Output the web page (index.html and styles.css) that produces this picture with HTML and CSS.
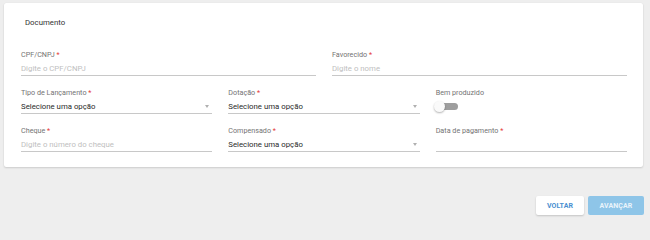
FILE: index.html
```html
<!DOCTYPE html>
<html lang="pt">
<head>
<meta charset="utf-8">
<link rel="stylesheet" href="styles.css">
</head>
<body>
<div class="page">
  <section class="card">
    <h2 class="title">Documento</h2>
    <div class="row two">
      <div class="field">
        <label class="label">CPF/CNPJ <span class="req">*</span></label>
        <div class="input placeholder">Digite o CPF/CNPJ</div>
      </div>
      <div class="field">
        <label class="label">Favorecido <span class="req">*</span></label>
        <div class="input placeholder">Digite o nome</div>
      </div>
    </div>
    <div class="row three">
      <div class="field">
        <label class="label">Tipo de Lançamento <span class="req">*</span></label>
        <div class="input select">Selecione uma opção<span class="caret"></span></div>
      </div>
      <div class="field">
        <label class="label">Dotação <span class="req">*</span></label>
        <div class="input select">Selecione uma opção<span class="caret"></span></div>
      </div>
      <div class="field">
        <label class="label">Bem produzido</label>
        <div class="toggle"><span class="track"></span><span class="knob"></span></div>
      </div>
    </div>
    <div class="row three">
      <div class="field">
        <label class="label">Cheque <span class="req">*</span></label>
        <div class="input placeholder">Digite o número do cheque</div>
      </div>
      <div class="field">
        <label class="label">Compensado <span class="req">*</span></label>
        <div class="input select">Selecione uma opção<span class="caret"></span></div>
      </div>
      <div class="field">
        <label class="label">Data de pagamento <span class="req">*</span></label>
        <div class="input"></div>
      </div>
    </div>
  </section>
  <div class="actions">
    <button class="btn back">VOLTAR</button>
    <button class="btn next">AVANÇAR</button>
  </div>
</div>
</body>
</html>
```
FILE: styles.css
```css
* { box-sizing: border-box; }
html, body { margin: 0; padding: 0; }
body {
  background: #eeeeee;
  font-family: Roboto, "Liberation Sans", sans-serif;
  width: 650px;
  height: 221px;
  overflow: hidden;
}
.page {
  padding: 3px 7px 0 4px;
}
.card {
  background: #ffffff;
  border-radius: 2px;
  box-shadow: 0 1px 2px rgba(0,0,0,0.14), 0 0 1px rgba(0,0,0,0.08);
  padding: 15px 16px 15px 17px;
}
.title {
  margin: 0 0 22px 4px;
  font-size: 7.8px;
  line-height: 10px;
  font-weight: 400;
  color: #333333;
}
.row {
  display: grid;
  column-gap: 16px;
  margin-bottom: 12px;
}
.row:last-child { margin-bottom: 0; }
.row.two { grid-template-columns: 1fr 1fr; }
.row.three { grid-template-columns: 1fr 1fr 1fr; }
.field { display: flex; flex-direction: column; }
.label {
  font-size: 7.2px;
  line-height: 10px;
  color: #737373;
}
.req { color: #e53935; }
.input {
  position: relative;
  height: 16px;
  padding-top: 2px;
  line-height: 13px;
  font-size: 7.8px;
  border-bottom: 1px solid #c8c8c8;
  color: #333333;
}
.input.placeholder {
  color: #c0c0c0;
  font-weight: 400;
}
.input.select { color: #2a2a2a; }
.caret {
  position: absolute;
  right: 3px;
  top: 7px;
  width: 0;
  height: 0;
  border-left: 2.5px solid transparent;
  border-right: 2.5px solid transparent;
  border-top: 3px solid #b0b0b0;
}
.toggle {
  position: relative;
  height: 16px;
  width: 24px;
}
.track {
  position: absolute;
  left: 0;
  top: 5px;
  width: 22px;
  height: 7px;
  border-radius: 4px;
  background: #9e9e9e;
}
.knob {
  position: absolute;
  left: -2px;
  top: 3px;
  width: 11px;
  height: 11px;
  border-radius: 50%;
  background: #fafafa;
  box-shadow: 0 1px 2px rgba(0,0,0,0.3);
}
.actions {
  display: flex;
  justify-content: flex-end;
  gap: 4px;
  margin-top: 29px;
  margin-right: -1px;
}
.btn {
  height: 19px;
  border: 0;
  border-radius: 2px;
  font-family: Roboto, "Liberation Sans", sans-serif;
  font-size: 7px;
  font-weight: 700;
  padding: 0;
  letter-spacing: 0.1px;
}
.btn.back {
  width: 48px;
  background: #ffffff;
  color: #4a8fd0;
  box-shadow: 0 1px 2px rgba(0,0,0,0.18);
}
.btn.next {
  width: 56px;
  background: #8ec5e8;
  color: #eaf4fb;
}
```
